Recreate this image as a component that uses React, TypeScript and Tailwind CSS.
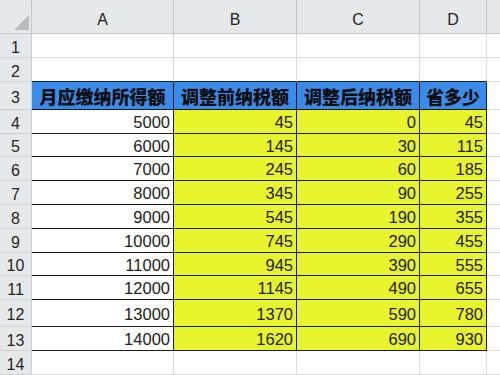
import React from "react";

const rowHeights = [24, 24, 28, 24, 23, 24, 24, 24, 24, 23, 24, 27, 24, 24];
const data: [number, number, number, number][] = [
  [5000, 45, 0, 45],
  [6000, 145, 30, 115],
  [7000, 245, 60, 185],
  [8000, 345, 90, 255],
  [9000, 545, 190, 355],
  [10000, 745, 290, 455],
  [11000, 945, 390, 555],
  [12000, 1145, 490, 655],
  [13000, 1370, 590, 780],
  [14000, 1620, 690, 930],
];
const headers = ["月应缴纳所得额", "调整前纳税额", "调整后纳税额", "省多少"];

export default function App() {
  const rows: React.ReactNode[] = [];
  rowHeights.forEach((h, i) => {
    const r = i + 1;
    const cells: React.ReactNode[] = [];
    cells.push(
      <div
        key="h"
        className="flex items-center justify-center overflow-hidden bg-[#e6e9e9] border-r border-b border-[#cdd1d1] text-[16px] text-[#262626] pt-[4px]"
      >
        {r}
      </div>
    );
    for (let c = 0; c < 4; c++) {
      let cls = "flex items-center overflow-hidden border-r border-b ";
      let content: React.ReactNode = null;
      if (r === 3) {
        cls += "bg-[#3a8cec] border-[#1b1b1b] justify-center font-black text-[18px] text-[#0d0d0d] pt-[1px] [font-family:'Noto_Sans_CJK_SC',sans-serif]";
        content = headers[c];
      } else if (r >= 4 && r <= 13) {
        const v = data[r - 4][c];
        cls +=
          (c === 0 ? "bg-white " : "bg-[#e8f42e] ") +
          "border-[#1b1b1b] justify-end pr-[3px] text-[16.5px] text-[#222] pt-[2px]";
        content = v;
      } else if (r === 2) {
        cls += "bg-white border-r-[#d9dddd] border-b-[#1b1b1b]";
      } else {
        cls += "bg-white border-[#d9dddd]";
      }
      cells.push(
        <div key={c} className={cls}>
          {content}
        </div>
      );
    }
    cells.push(<div key="e" className="bg-white border-b border-[#d9dddd]" />);
    rows.push(
      <div
        key={r}
        className="grid grid-cols-[32px_142px_123px_123px_67px_13px] grid-rows-[minmax(0,1fr)] leading-none"
        style={{ height: h }}
      >
        {cells}
      </div>
    );
  });

  return (
    <div className="w-[500px] h-[375px] overflow-hidden bg-white [font-family:'Liberation_Sans',Arial,sans-serif]">
      <div className="grid grid-cols-[32px_142px_123px_123px_67px_13px] grid-rows-[minmax(0,1fr)] leading-none h-[34px] bg-[#e6e9e9]">
        <div className="relative border-r border-b border-[#c4c8c8]">
          <svg className="absolute left-[14px] top-[15px]" width="15" height="15" viewBox="0 0 15 15">
            <polygon points="15,0 15,15 0,15" fill="#b9bdbd" />
          </svg>
        </div>
        {["A", "B", "C", "D"].map((l) => (
          <div
            key={l}
            className="flex items-center justify-center border-r border-b border-[#c4c8c8] text-[16px] text-[#262626] pt-[7px]"
          >
            {l}
          </div>
        ))}
        <div className="border-b border-[#c4c8c8]" />
      </div>
      {rows}
    </div>
  );
}
